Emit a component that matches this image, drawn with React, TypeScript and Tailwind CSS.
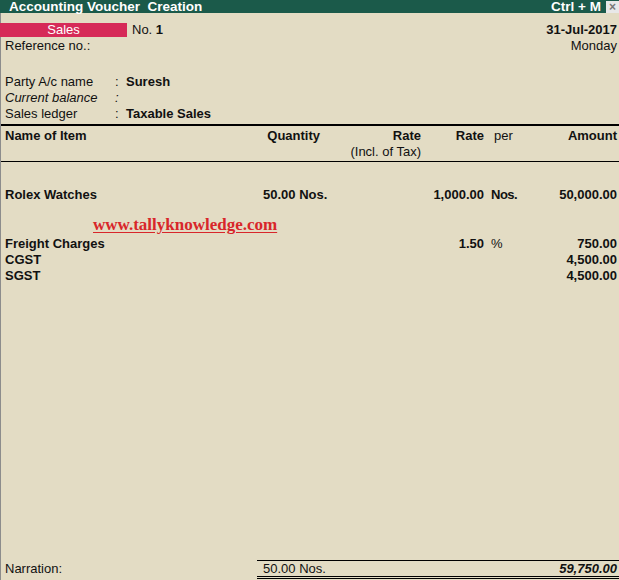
export default function App() {
  const cols = "grid grid-cols-[256px_66px_100px_63px_55px_1fr]";
  return (
    <div className="w-[619px] h-[580px] flex flex-col bg-[#e3dcc4] text-[13px] leading-[16px] text-[#111] font-['Liberation_Sans',Arial,sans-serif] overflow-hidden">
      {/* title bar */}
      <div className="h-[13px] bg-[#1b5a4a] flex items-center text-white font-bold text-[13.5px] leading-[13px]">
        <span className="pl-[9px] whitespace-pre">Accounting Voucher  Creation</span>
        <span className="ml-auto pr-[5px]">Ctrl + M</span>
        <span className="w-[13px] h-[12px] bg-[#e8e8e8] text-[#777] flex items-center justify-center text-[12px] leading-none">×</span>
      </div>

      <div className="flex-1 flex flex-col border-l border-[#8c8c8c]">
        {/* voucher head */}
        <div className="flex mt-[10px] h-[14px] items-center">
          <div className="w-[127px] h-[14px] bg-[#d62a58] text-white flex items-center justify-center text-[13px] leading-[14px] -ml-px">Sales</div>
          <span className="ml-[5px]">No. <b>1</b></span>
          <span className="ml-auto pr-[2px] font-bold">31-Jul-2017</span>
        </div>
        <div className="flex h-[16px] mt-[1px]">
          <span className="pl-[4px]">Reference no.:</span>
          <span className="ml-auto pr-[2px]">Monday</span>
        </div>

        <div className="mt-[20px] pl-[4px]">
          <div className="flex h-[16px]">
            <span className="w-[110px]">Party A/c name</span>
            <span className="w-[11px]">:</span>
            <span className="font-bold">Suresh</span>
          </div>
          <div className="flex h-[16px] italic">
            <span className="w-[110px]">Current balance</span>
            <span className="w-[11px]">:</span>
          </div>
          <div className="flex h-[16px]">
            <span className="w-[110px]">Sales ledger</span>
            <span className="w-[11px]">:</span>
            <span className="font-bold">Taxable Sales</span>
          </div>
        </div>

        {/* column headings */}
        <div className="mt-[2px] border-t-2 border-black" />
        <div className={`${cols} pt-[2px] pb-[1px] border-b border-black`}>
          <div className="pl-[4px] font-bold">Name of Item</div>
          <div className="text-right pr-[3px] font-bold">Quantity</div>
          <div className="text-right pr-[2px]">
            <div className="font-bold">Rate</div>
            <div>(Incl. of Tax)</div>
          </div>
          <div className="text-right pr-[2px] font-bold">Rate</div>
          <div className="pl-[8px]">per</div>
          <div className="text-right pr-[2px] font-bold">Amount</div>
        </div>

        {/* items */}
        <div className={`${cols} mt-[25px] font-bold h-[16px]`}>
          <div className="pl-[4px]">Rolex Watches</div>
          <div className="pl-[6px] whitespace-nowrap">50.00 Nos.</div>
          <div />
          <div className="text-right pr-[2px]">1,000.00</div>
          <div className="pl-[5px] tracking-[-0.5px]">Nos.</div>
          <div className="text-right pr-[2px]">50,000.00</div>
        </div>

        <div className="h-[33px] pt-[13px] pl-[92px]">
          <span className="block leading-[18px] text-[#d8262a] font-bold underline underline-offset-2 text-[17px] font-['Liberation_Serif','Times_New_Roman',serif]">
            www.tallyknowledge.com
          </span>
        </div>

        <div className={`${cols} font-bold h-[16px]`}>
          <div className="pl-[4px]">Freight Charges</div>
          <div />
          <div />
          <div className="text-right pr-[2px]">1.50</div>
          <div className="pl-[5px] font-normal">%</div>
          <div className="text-right pr-[2px]">750.00</div>
        </div>
        <div className={`${cols} font-bold h-[16px]`}>
          <div className="pl-[4px]">CGST</div>
          <div />
          <div />
          <div />
          <div />
          <div className="text-right pr-[2px]">4,500.00</div>
        </div>
        <div className={`${cols} font-bold h-[16px]`}>
          <div className="pl-[4px]">SGST</div>
          <div />
          <div />
          <div />
          <div />
          <div className="text-right pr-[2px]">4,500.00</div>
        </div>

        {/* totals */}
        <div className="mt-auto mb-[1px] flex h-[19px] items-start">
          <div className="w-[256px] pl-[4px] pt-[1px]">Narration:</div>
          <div className="flex-1 flex border-t border-black border-b-[3px] border-b-black [border-bottom-style:double] h-[19px]">
            <span className="pl-[6px]">50.00 Nos.</span>
            <span className="ml-auto pr-[2px] font-bold italic">59,750.00</span>
          </div>
        </div>
      </div>
    </div>
  );
}
